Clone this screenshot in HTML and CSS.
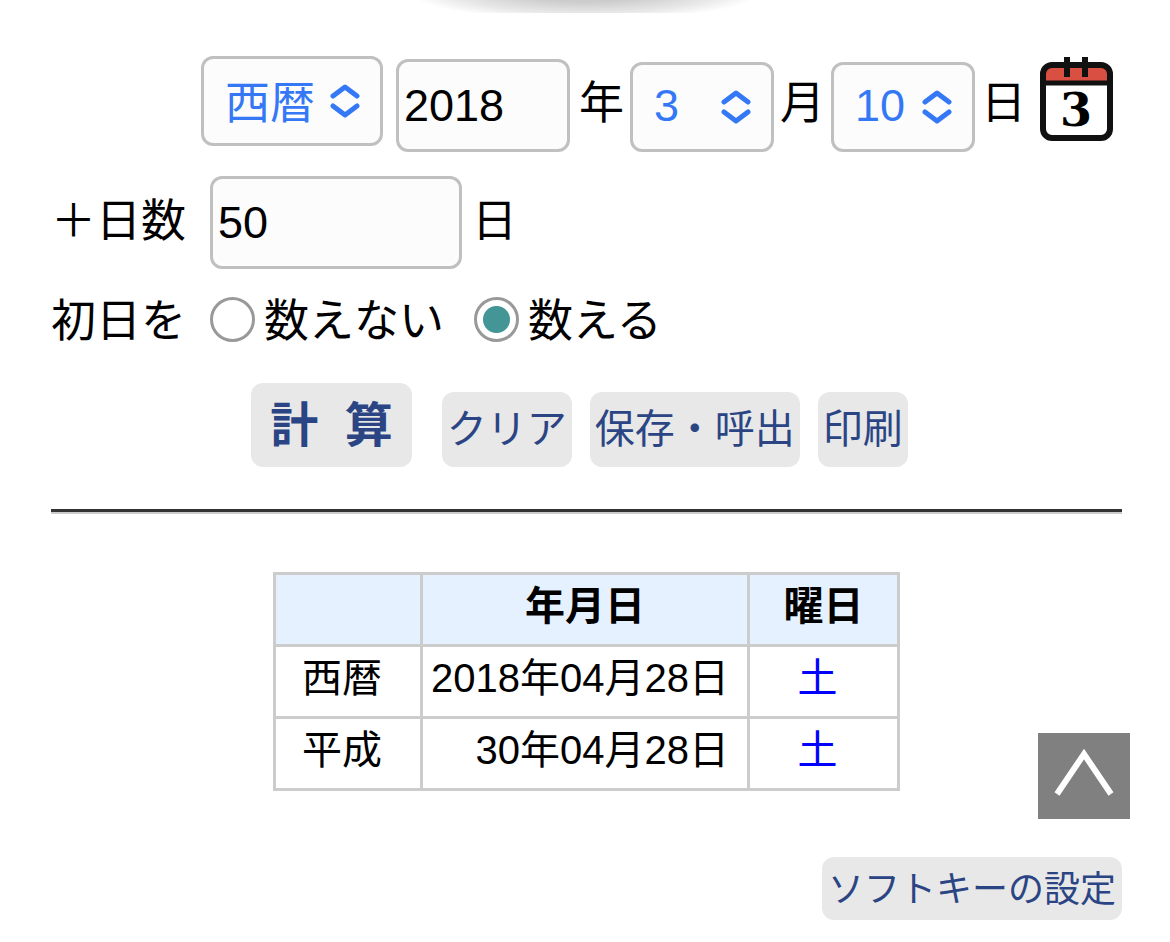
FILE: index.html
```html
<!DOCTYPE html>
<html lang="ja">
<head>
  <meta charset="UTF-8">
  <meta name="viewport" content="width=device-width, initial-scale=1">
  <title>日数計算</title>
  <link rel="stylesheet" href="styles.css">
</head>
<body>
  <div class="shade"></div>
  <main class="container">
    <form id="calc" onsubmit="return false">
      <div class="row date-row">
        <span class="select-box era">
          <select id="era" aria-label="暦">
            <option>西暦</option>
            <option>平成</option>
            <option>昭和</option>
          </select>
          <svg class="arrows" viewBox="0 0 30 34"><path d="M3 12 15 3 27 12M3 22 15 31 27 22"/></svg>
        </span>
        <input type="text" id="year" class="year" value="2018">
        <label class="unit" for="year">年</label>
        <span class="select-box">
          <select id="month">
            <option>3</option>
            <option>4</option>
          </select>
          <svg class="arrows" viewBox="0 0 30 34"><path d="M3 12 15 3 27 12M3 22 15 31 27 22"/></svg>
        </span>
        <label class="unit" for="month">月</label>
        <span class="select-box">
          <select id="day">
            <option>10</option>
            <option>11</option>
          </select>
          <svg class="arrows" viewBox="0 0 30 34"><path d="M3 12 15 3 27 12M3 22 15 31 27 22"/></svg>
        </span>
        <label class="unit" for="day">日</label>
        <button type="button" class="calendar" aria-label="カレンダー">
          <svg viewBox="0 0 73 86">
            <rect x="3" y="10" width="67" height="73" rx="8" fill="#fff"/>
            <path d="M3 27V18Q3 9 11 9H62Q70 9 70 18V27Z" fill="#d94f41"/>
            <path d="M3 27H70" stroke="#111" stroke-width="5"/>
            <rect x="3" y="9" width="67" height="73" rx="9" fill="none" stroke="#111" stroke-width="6"/>
            <path d="M27 1V21M45 1V21" stroke="#111" stroke-width="6"/>
            <text x="36" y="70" text-anchor="middle">3</text>
          </svg>
        </button>
      </div>

      <div class="row days-row">
        <label class="caption" for="days">＋日数</label>
        <input type="text" id="days" class="days" value="50">
        <span>日</span>
      </div>

      <div class="row first-row">
        <span class="caption">初日を</span>
        <label class="choice"><input type="radio" name="first" value="0">数えない</label>
        <label class="choice"><input type="radio" name="first" value="1" checked>数える</label>
      </div>

      <div class="buttons">
        <button type="submit" class="btn btn-calc">計&nbsp; 算</button>
        <button type="reset" class="btn">クリア</button>
        <button type="button" class="btn">保存・呼出</button>
        <button type="button" class="btn">印刷</button>
      </div>
    </form>

    <hr>

    <table>
      <thead>
        <tr>
          <th class="col-era"></th>
          <th class="col-date">年月日</th>
          <th class="col-week">曜日</th>
        </tr>
      </thead>
      <tbody>
        <tr>
          <td class="name">西暦</td>
          <td class="date">2018年04月28日</td>
          <td class="sat">土</td>
        </tr>
        <tr>
          <td class="name">平成</td>
          <td class="date">30年04月28日</td>
          <td class="sat">土</td>
        </tr>
      </tbody>
    </table>

    <div class="settings">
      <button type="button" class="btn btn-small">ソフトキーの設定</button>
    </div>
  </main>

  <a href="#calc" class="page-top" aria-label="ページの先頭へ">
    <svg viewBox="0 0 92 86"><path d="M19 61 46 21 73 61"/></svg>
  </a>
</body>
</html>
```
FILE: styles.css
```css
* {
  box-sizing: border-box;
}
body {
  margin: 0;
  background: #fff;
  color: #000;
  font-family: "Liberation Sans", "Noto Sans CJK JP", sans-serif;
  font-size: 45px;
}
input, select, button {
  font: inherit;
  margin: 0;
}
.shade {
  width: 328px;
  height: 13px;
  margin: 0 auto;
  background: radial-gradient(ellipse 54% 28px at 50% -8px, #c4c4c4 0%, #ccc 35%, #e8e8e8 75%, #fff 100%);
}
.container {
  padding: 43px 48px 0 51px;
}
.row {
  display: flex;
  align-items: center;
  white-space: nowrap;
}

/* 入力欄 */
select, input[type="text"] {
  border: 3px solid #c0c0c0;
  border-radius: 12px;
  background: #fcfcfc;
}
input[type="text"] {
  height: 93px;
  padding: 0 5px;
  color: #000;
}
select {
  appearance: none;
  width: 144px;
  height: 90px;
  padding: 0 21px 4px;
  color: #3478f6;
}
.select-box {
  position: relative;
  display: flex;
}
.arrows {
  position: absolute;
  right: 23px;
  top: 28px;
  width: 30px;
  height: 34px;
  fill: none;
  stroke: #3478f6;
  stroke-width: 5;
  stroke-linecap: round;
  stroke-linejoin: round;
  pointer-events: none;
}
.date-row {
  height: 96px;
  padding-left: 150px;
  align-items: flex-end;
}
.era {
  align-self: flex-start;
  margin-right: 13px;
}
.era select {
  width: 182px;
  padding-top: 4px;
  padding-bottom: 0;
}
.year {
  width: 174px;
  margin-right: 3px;
}
.unit {
  width: 57px;
  line-height: 96px;
  text-align: center;
}
.calendar {
  align-self: flex-start;
  width: 73px;
  height: 86px;
  margin-left: 8px;
  padding: 0;
  border: none;
  background: none;
}
.calendar svg {
  display: block;
}
.calendar text {
  font-family: "DejaVu Serif", serif;
  font-weight: bold;
  font-size: 46px;
}
.days-row {
  margin-top: 24px;
  line-height: 92px;
  align-items: flex-start;
}
.caption {
  width: 159px;
}
.days {
  width: 252px;
  margin-right: 10px;
}
.first-row {
  height: 64px;
  margin-top: 21px;
  gap: 30px;
  line-height: 64px;
}
.first-row .caption {
  width: 129px;
}
.choice {
  display: flex;
  align-items: center;
  gap: 9px;
}
input[type="radio"] {
  appearance: none;
  width: 45px;
  height: 45px;
  margin-bottom: 6px;
  border: 3px solid #999;
  border-radius: 50%;
  background: #fff;
}
input[type="radio"]:checked {
  background: radial-gradient(circle, #449595 13px, #fff 14px);
}

/* ボタン */
.btn {
  height: 75px;
  padding: 0 5px 8px;
  border: none;
  border-radius: 12px;
  background: #e8e8e8;
  color: #2b4584;
  font-size: 40px;
  white-space: nowrap;
}
.buttons {
  display: flex;
  justify-content: center;
  align-items: flex-end;
  gap: 18px;
  margin-top: 29px;
  padding-right: 14px;
}
.btn-calc {
  height: 84px;
  margin-right: 12px;
  padding: 0 19px 8px;
  font-size: 48px;
  font-weight: bold;
}
hr {
  height: 5px;
  margin: 42px 0 58px;
  border: none;
  border-top: 3px solid #333;
  border-bottom: 2px solid #ccc;
}

/* 結果 */
table {
  margin: 0 auto;
  border-collapse: collapse;
  font-size: 40px;
  line-height: 60px;
}
th, td {
  height: 72px;
  padding: 0 8px 8px;
  border: 3px solid #ccc;
  text-align: center;
}
th {
  background: #e6f1ff;
}
.col-era {
  width: 147px;
}
.col-date {
  width: 327px;
}
.col-week {
  width: 150px;
}
td.name {
  padding-right: 20px;
}
td.date {
  padding-right: 18px;
  text-align: right;
  white-space: nowrap;
}
td.sat {
  padding-right: 20px;
  color: #00f;
}
.settings {
  margin-top: 66px;
  text-align: right;
}
.btn-small {
  height: 63px;
  padding: 0 6px 6px;
  font-size: 36px;
  vertical-align: top;
}
.page-top {
  position: fixed;
  right: 40px;
  bottom: 123px;
  width: 92px;
  height: 86px;
  background: #808080;
}
.page-top path {
  fill: none;
  stroke: #fff;
  stroke-width: 6;
}
```
